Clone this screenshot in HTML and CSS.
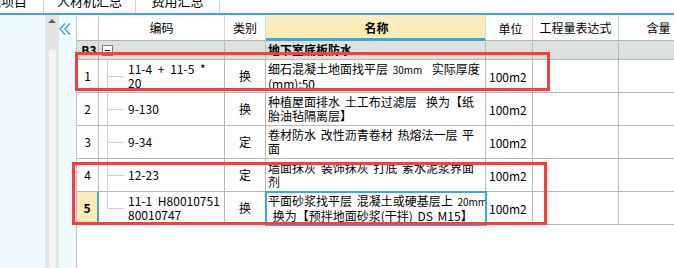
FILE: index.html
```html
<!DOCTYPE html>
<html lang="zh">
<head>
<meta charset="utf-8">
<title>预算书</title>
<link rel="stylesheet" href="styles.css">
</head>
<body>
<div class="tabs">
  <div class="tab tab-a"><span class="shift">措施项目</span></div>
  <div class="tab tab-b"><span class="lbl">人材机汇总</span></div>
  <div class="tab tab-c"><span class="lbl">费用汇总</span></div>
</div>
<div class="main">
  <div class="side"></div>
  <div class="scroll">
    <div class="arrow"></div>
    <div class="thumb"></div>
  </div>
  <div class="collapse">
    <svg class="notch" width="8" height="24" viewBox="0 0 8 24"><polygon points="8,0 1,11 8,24" fill="#fff"/></svg>
    <svg class="chev" width="12" height="12" viewBox="0 0 12 12"><polyline points="6,0.5 1,6 6,11.5" fill="none" stroke="#3aa8d8" stroke-width="1.4"/><polyline points="11,0.5 6,6 11,11.5" fill="none" stroke="#3aa8d8" stroke-width="1.4"/></svg>
  </div>
  <div class="grid">
    <div class="row head">
      <div class="c num"></div>
      <div class="c code hc">编码</div>
      <div class="c type hc">类别</div>
      <div class="c name hc hname">名称</div>
      <div class="c unit hc">单位</div>
      <div class="c expr hc">工程量表达式</div>
      <div class="c amt hc">含量</div>
    </div>
    <div class="row group">
      <div class="c num b">B3</div>
      <div class="c code"><span class="minus"></span></div>
      <div class="c type"></div>
      <div class="c name b">地下室底板防水</div>
      <div class="c unit"></div>
      <div class="c expr"></div>
      <div class="c amt"></div>
    </div>
    <div class="row">
      <div class="c num">1</div>
      <div class="c code tree"><div class="t">11-4 + 11-5 *<br>20</div></div>
      <div class="c type">换</div>
      <div class="c name"><div class="t">细石混凝土地面找平层 <span class="sm">30mm</span>&nbsp; 实际厚度<br>(mm):50</div></div>
      <div class="c unit">100m2</div>
      <div class="c expr"></div>
      <div class="c amt"></div>
    </div>
    <div class="row">
      <div class="c num">2</div>
      <div class="c code tree"><div class="t">9-130</div></div>
      <div class="c type">换</div>
      <div class="c name"><div class="t">种植屋面排水 土工布过滤层&nbsp; 换为【纸<br>胎油毡隔离层】</div></div>
      <div class="c unit">100m2</div>
      <div class="c expr"></div>
      <div class="c amt"></div>
    </div>
    <div class="row">
      <div class="c num">3</div>
      <div class="c code tree"><div class="t">9-34</div></div>
      <div class="c type">定</div>
      <div class="c name"><div class="t">卷材防水 改性沥青卷材 热熔法一层 平<br>面</div></div>
      <div class="c unit">100m2</div>
      <div class="c expr"></div>
      <div class="c amt"></div>
    </div>
    <div class="row">
      <div class="c num">4</div>
      <div class="c code tree"><div class="t">12-23</div></div>
      <div class="c type">定</div>
      <div class="c name"><div class="t">墙面抹灰 装饰抹灰 打底 素水泥浆界面<br>剂</div></div>
      <div class="c unit">100m2</div>
      <div class="c expr"></div>
      <div class="c amt"></div>
    </div>
    <div class="row">
      <div class="c num cur">5</div>
      <div class="c code tree last"><div class="t">11-1 H80010751<br>80010747</div></div>
      <div class="c type">换</div>
      <div class="c name sel"><div class="t">平面砂浆找平层 混凝土或硬基层上 <span class="sm">20mm</span><br>&nbsp;换为【预拌地面砂浆(干拌) DS M15】</div></div>
      <div class="c unit">100m2</div>
      <div class="c expr"></div>
      <div class="c amt"></div>
    </div>
  </div>
</div>
<div class="mark mark-1"></div>
<div class="mark mark-2"></div>
</body>
</html>
```

FILE: styles.css
```css
* { box-sizing: border-box; }
html, body { margin: 0; padding: 0; }
body {
  width: 674px;
  height: 268px;
  overflow: hidden;
  background: #fff;
  font-family: "Noto Sans CJK SC", "DejaVu Sans", sans-serif;
  font-size: 12px;
  color: #000;
  position: relative;
}
.tabs {
  display: flex;
  height: 15px;
  overflow: hidden;
  border-bottom: 2px solid #3aa8d8;
  background: #fff;
}
.tab {
  height: 13px;
  font-size: 13px;
  line-height: 13px;
  white-space: nowrap;
  border-right: 1px solid #d4d4d4;
  overflow: hidden;
}
.tab-a { width: 44px; }
.tab-b { width: 92px; text-align: center; }
.tab-c { width: 84px; text-align: center; }
.shift, .lbl { display: inline-block; position: relative; top: -6px; }
.shift { margin-left: -25px; }

.main {
  display: flex;
  height: 253px;
}
.side { width: 45px; background: #eefafc; }
.scroll {
  width: 14px;
  background: #e4e4e4;
  padding: 4px 3px 0 3px;
  display: flex;
  flex-direction: column;
  align-items: center;
}
.arrow {
  width: 0; height: 0;
  border-left: 4px solid transparent;
  border-right: 4px solid transparent;
  border-bottom: 4px solid #5c5c5c;
  margin-bottom: 27px;
}
.thumb {
  width: 7px;
  height: 222px;
  background: #f4f4f4;
  margin-left: 1px;
}
.collapse {
  width: 18px;
  background: #eefafc;
  border-right: 1px solid #c4c4c4;
  position: relative;
}
.notch { position: absolute; right: 0; top: 3px; }
.chev { position: absolute; left: 0; top: 8px; }

.grid { flex: 1; overflow: hidden; }
.row {
  display: grid;
  grid-template-columns: 22px 126px 41px 220px 47px 86px 80px;
  height: 33px;
}
.c {
  border-right: 1px solid #b9b9b9;
  border-bottom: 1px solid #b9b9b9;
  display: flex;
  align-items: center;
  line-height: 14px;
  white-space: nowrap;
  overflow: hidden;
  word-spacing: 3px;
}
.t { white-space: nowrap; }
.name { word-spacing: 2px; }
.sm { font-size: 10px; word-spacing: 0; }
.head { height: 26px; }
.head .c { border-right-color: #d6d6d6; border-bottom-color: #b0b0b0; justify-content: center; }
.head .num { border-right-color: #c8c8c8; }
.hname {
  background: #fdecb8;
  font-weight: bold;
  box-shadow: inset 0 -2px 0 #3aa8d8;
  border-bottom-color: #3aa8d8 !important;
}
.group { height: 19px; background: #dbe2de; }
.group .c { align-items: flex-start; padding-top: 2px; }
.group .num { padding-left: 3px; }
.group .name { padding-left: 2px; }
.b { font-weight: bold; }
.minus {
  display: block;
  width: 11px;
  height: 11px;
  margin: 2px 0 0 3px;
  border: 1px solid #7a7a7a;
  background: #fff;
  position: relative;
}
.minus::after {
  content: "";
  position: absolute;
  left: 2px; right: 2px; top: 4px;
  height: 1px;
  background: #000;
}
.num { justify-content: center; }
.num.cur { background: #fdecb8; border-right: 2px solid #3aa8d8; font-weight: bold; }
.type { justify-content: center; }
.name { padding-left: 2px; }
.unit { padding-left: 3px; padding-top: 2px; }
.code { position: relative; overflow: visible; }
.tree { padding-left: 29px; }
.tree::before {
  content: "";
  position: absolute;
  left: 8px; top: -1px; bottom: -1px;
  width: 1px;
  background: #cfcfcf;
}
.tree.last::before { bottom: 50%; }
.tree::after {
  content: "";
  position: absolute;
  left: 9px; top: 50%;
  width: 16px; height: 1px;
  background: #cfcfcf;
}
.sel { outline: 2px solid #3aa8d8; outline-offset: -1px; position: relative; z-index: 1; }

.mark {
  position: absolute;
  border: 3px solid #ff3b3b;
  z-index: 5;
}
.mark-1 { left: 75px; top: 52px; width: 475px; height: 39px; }
.mark-2 { left: 72px; top: 162px; width: 475px; height: 63px; }
```
